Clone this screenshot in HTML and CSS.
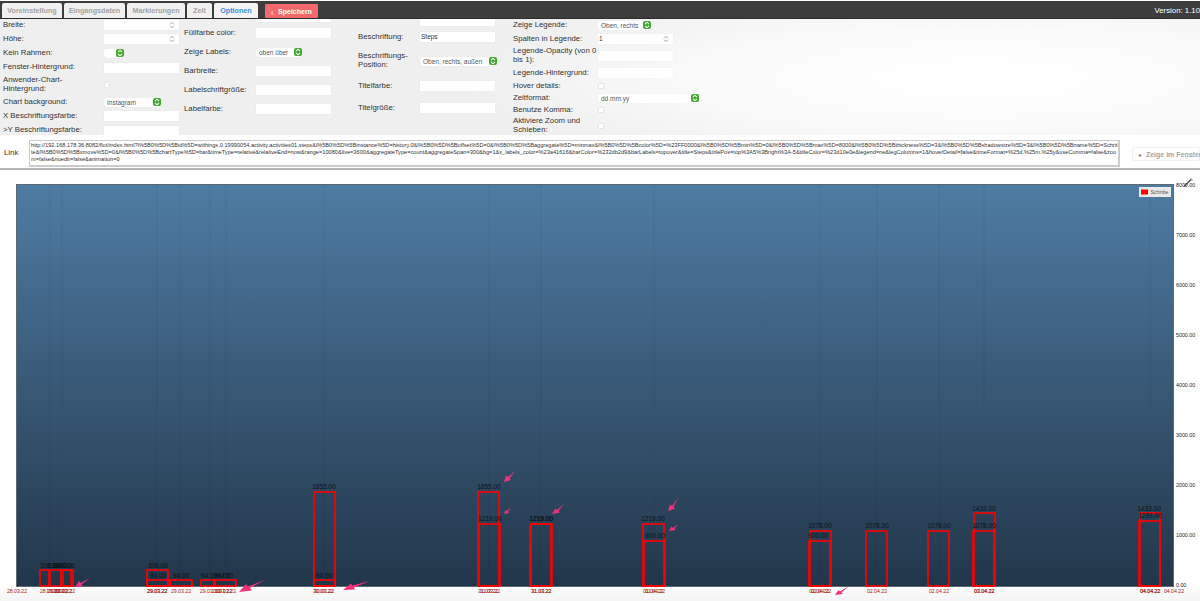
FILE: index.html
```html
<!DOCTYPE html>
<html lang="en">
<head>
    <meta charset="UTF-8">
    <title>Flot Edit</title>
    <link rel="stylesheet" href="styles.css">
</head>
<body>
    <svg class="defs" width="0" height="0">
        <symbol id="updown" viewBox="0 0 8 10">
            <path d="M1.5 4 4 1.5 6.500 4M1.500 6 4 8.500 6.500 6" fill="none" stroke-width="1.300"/>
        </symbol>
    </svg>

    <header class="topbar">
        <nav class="tabs">
            <a class="tab tab-preset">Voreinstellung</a>
            <a class="tab tab-input">Eingangsdaten</a>
            <a class="tab tab-marks">Markierungen</a>
            <a class="tab tab-time">Zeit</a>
            <a class="tab tab-options active">Optionen</a>
        </nav>
        <button class="save-btn"><span class="save-icon">▮</span> Speichern</button>
        <div class="version">Version: 1.10</div>
    </header>

    <section class="options">
        <div class="col col-1">
            <label>Breite:</label><div class="field number"><svg class="spin"><use href="#updown"/></svg></div>
            <label>Höhe:</label><div class="field number"><svg class="spin"><use href="#updown"/></svg></div>
            <label>Kein Rahmen:</label><div class="select select-tiny"><span></span><b><svg><use href="#updown"/></svg></b></div>
            <label>Fenster-Hintergrund:</label><div class="field"></div>
            <label>Anwender-Chart-Hintergrund:</label><div><input type="checkbox" class="check"></div>
            <label>Chart background:</label><div class="select select-bg"><span>Instagram</span><b><svg><use href="#updown"/></svg></b></div>
            <label>X Beschriftungsfarbe:</label><div class="field"></div>
            <label>&gt;Y Beschriftungsfarbe:</label><div class="field"></div>
        </div>
        <div class="col col-2">
            <label></label><div class="field"></div>
            <label>Füllfarbe color:</label><div class="field"></div>
            <label>Zeige Labels:</label><div class="select select-labels"><span>oben über</span><b><svg><use href="#updown"/></svg></b></div>
            <label>Barbreite:</label><div class="field"></div>
            <label>Labelschriftgröße:</label><div class="field"></div>
            <label>Labelfarbe:</label><div class="field"></div>
        </div>
        <div class="col col-3">
            <label></label><div class="field"></div>
            <label>Beschriftung:</label><div class="field">Steps</div>
            <label>Beschriftungs-Position:</label><div class="select select-pos"><span>Oben, rechts, außen</span><b><svg><use href="#updown"/></svg></b></div>
            <label>Titelfarbe:</label><div class="field"></div>
            <label>Titelgröße:</label><div class="field"></div>
        </div>
        <div class="col col-4">
            <label>Zeige Legende:</label><div class="select select-legend"><span>Oben, rechts</span><b><svg><use href="#updown"/></svg></b></div>
            <label>Spalten in Legende:</label><div class="field number">1<svg class="spin"><use href="#updown"/></svg></div>
            <label>Legende-Opacity (von 0 bis 1):</label><div class="field"></div>
            <label>Legende-Hintergrund:</label><div class="field"></div>
            <label>Hover details:</label><div><input type="checkbox" class="check"></div>
            <label>Zeitformat:</label><div class="select select-format"><span>dd.mm.yy</span><b><svg><use href="#updown"/></svg></b></div>
            <label>Benutze Komma:</label><div><input type="checkbox" class="check"></div>
            <label>Aktiviere Zoom und Schieben:</label><div><input type="checkbox" class="check"></div>
        </div>
    </section>

    <section class="link-row">
        <label class="link-label">Link</label>
        <textarea class="link-text" wrap="off" readonly>http://192.168.178.36:8082/flot/index.html?l%5B0%5D%5Bid%5D=withings.0.19990054.activity.activities01.steps&amp;l%5B0%5D%5Binstance%5D=history.0&amp;l%5B0%5D%5Boffset%5D=0&amp;l%5B0%5D%5Baggregate%5D=minmax&amp;l%5B0%5D%5Bcolor%5D=%23FF0000&amp;l%5B0%5D%5Bmin%5D=0&amp;l%5B0%5D%5Bmax%5D=8000&amp;l%5B0%5D%5Bthickness%5D=3&amp;l%5B0%5D%5Bshadowsize%5D=3&amp;l%5B0%5D%5Bname%5D=Schrit
te&amp;l%5B0%5D%5Bxmove%5D=0&amp;l%5B0%5D%5BchartType%5D=bar&amp;timeType=relative&amp;relativeEnd=now&amp;range=10080&amp;live=3600&amp;aggregateType=count&amp;aggregateSpan=300&amp;bg=1&amp;x_labels_color=%23a41616&amp;barColor=%232db2d9&amp;barLabels=topover&amp;title=Steps&amp;titlePos=top%3A5%3Bright%3A-5&amp;titleColor=%23d10e0e&amp;legend=ne&amp;legColumns=1&amp;hoverDetail=false&amp;timeFormat=%25d.%25m.%25y&amp;useComma=false&amp;zoo
m=false&amp;noedit=false&amp;animation=0</textarea>
        <button class="window-btn"><span class="play">►</span> Zeige im Fenster</button>
    </section>

    <section class="chart-wrap">
        <svg class="chart" width="1200" height="431" viewBox="0 170 1200 431">
            <defs>
                <linearGradient id="plotBg" x1="0" y1="0" x2="0" y2="1">
                    <stop offset="0" stop-color="#4f7ca3"/>
                    <stop offset="1" stop-color="#22364a"/>
                </linearGradient>
            </defs>
            <rect class="plot" x="16.500" y="184.500" width="1157" height="402"/>

            <!-- faint grid -->
            <g class="grid">
                <path d="M50 185V586M62 185V586M157 185V586M180 185V586M210 185V586M226 185V586M324 185V586M489 185V586M541 185V586M654 185V586M820 185V586M877 185V586M939 185V586M984 185V586M1150 185V586"/>
            </g>

            <!-- bars -->
            <g class="bars">
                <rect x="40" y="570" width="9" height="16"/>
                <rect x="50" y="570" width="11" height="16"/>
                <rect x="61" y="570" width="10" height="16"/>
                <rect x="63" y="570" width="10" height="16"/>
                <rect x="147" y="570" width="21" height="16"/>
                <rect x="147" y="580" width="21" height="6"/>
                <rect x="170" y="580" width="22" height="6"/>
                <rect x="201" y="580" width="13" height="6"/>
                <rect x="215" y="580" width="21" height="6"/>
                <rect x="314" y="492" width="21" height="94"/>
                <rect x="314" y="580" width="21" height="6"/>
                <rect x="478" y="492" width="21" height="94"/>
                <rect x="479" y="524" width="21" height="62"/>
                <rect x="530" y="524" width="21" height="62"/>
                <rect x="531" y="524" width="21" height="62"/>
                <rect x="643" y="524" width="21" height="62"/>
                <rect x="644" y="541" width="21" height="45"/>
                <rect x="810" y="531" width="21" height="55"/>
                <rect x="809" y="541" width="21" height="45"/>
                <rect x="866" y="531" width="21" height="55"/>
                <rect x="928" y="531" width="21" height="55"/>
                <rect x="974" y="513" width="21" height="73"/>
                <rect x="973" y="531" width="21" height="55"/>
                <rect x="1139" y="521" width="21" height="65"/>
                <rect x="1140" y="513" width="20" height="73"/>
            </g>

            <!-- bar labels -->
            <g class="bar-labels">
                <text x="50" y="568">306.00</text>
                <text x="57" y="568">300.00</text>
                <text x="62" y="568">300.00</text>
                <text x="65" y="568">300.00</text>
                <text x="158" y="568">306.00</text>
                <text x="158" y="578">94.00</text>
                <text x="181" y="578">94.00</text>
                <text x="209" y="578">94.00</text>
                <text x="222" y="578">94.00</text>
                <text x="225" y="578">94.00</text>
                <text x="324" y="489">1855.00</text>
                <text x="324" y="578">94.00</text>
                <text x="489" y="489">1855.00</text>
                <text x="490" y="521">1219.00</text>
                <text x="541" y="521">1219.00</text>
                <text x="541.300" y="521">1219.00</text>
                <text x="653" y="521">1219.00</text>
                <text x="655" y="538">900.00</text>
                <text x="820" y="528">1078.00</text>
                <text x="818" y="538">900.00</text>
                <text x="877" y="528">1078.00</text>
                <text x="939" y="528">1078.00</text>
                <text x="984" y="511">1433.00</text>
                <text x="984" y="528">1078.00</text>
                <text x="1149" y="511">1433.00</text>
                <text x="1150" y="518">1289.00</text>
            </g>

            <!-- x axis -->
            <g class="x-labels">
                <text x="17" y="593">28.03.22</text>
                <text x="50" y="593">28.03.22</text>
                <text x="57" y="593">28.03.22</text>
                <text x="62" y="593">28.03.22</text>
                <text x="65" y="593">28.03.22</text>
                <text x="157" y="593">29.03.22</text>
                <text x="157.400" y="593">29.03.22</text>
                <text x="181" y="593">29.03.22</text>
                <text x="210" y="593">29.03.22</text>
                <text x="222" y="593">29.03.22</text>
                <text x="226" y="593">29.03.22</text>
                <text x="323" y="593">30.03.22</text>
                <text x="324" y="593">30.03.22</text>
                <text x="488" y="593">31.03.22</text>
                <text x="490" y="593">31.03.22</text>
                <text x="541" y="593">31.03.22</text>
                <text x="541.400" y="593">31.03.22</text>
                <text x="653" y="593">01.04.22</text>
                <text x="655" y="593">01.04.22</text>
                <text x="819" y="593">02.04.22</text>
                <text x="821" y="593">02.04.22</text>
                <text x="877" y="593">02.04.22</text>
                <text x="939" y="593">02.04.22</text>
                <text x="984" y="593">03.04.22</text>
                <text x="984.400" y="593">03.04.22</text>
                <text x="1150" y="593">04.04.22</text>
                <text x="1150.400" y="593">04.04.22</text>
                <text x="1174" y="593">04.04.22</text>
            </g>

            <!-- y axis -->
            <g class="y-labels">
                <text x="1176" y="187">8000.00</text>
                <text x="1176" y="237">7000.00</text>
                <text x="1176" y="287">6000.00</text>
                <text x="1176" y="337">5000.00</text>
                <text x="1176" y="387">4000.00</text>
                <text x="1176" y="437">3000.00</text>
                <text x="1176" y="487">2000.00</text>
                <text x="1176" y="537">1000.00</text>
                <text x="1176" y="587">0.00</text>
            </g>

            <!-- legend -->
            <rect class="legend-box" x="1139" y="187" width="32" height="10"/>
            <rect class="legend-swatch" x="1141" y="189.500" width="7" height="5"/>
            <text class="legend-text" x="1150.500" y="194">Schritte</text>

            <!-- edit pencil -->
            <g class="pencil">
                <path d="M1184 186.500 1191 179.500"/>
                <path class="pencil-tip" d="M1190.500 178.500 1192.500 180.500"/>
            </g>

            <!-- annotation arrows -->
            <g class="arrows">
                <path d="M75 587 79 581 80.500 583 90 578 81.500 584.500 83 586Z"/>
                <path d="M239 592 246 584 248 586.500 265 580 250 588 252 590.500Z"/>
                <path d="M343 590 351 583.500 352.500 585.500 370 581 354 587.500 355 589.500Z"/>
                <path d="M504 482 506 475.500 508 477 515 471 509.500 478.500 511 480Z"/>
                <path d="M504 514 505.500 510 507 511 511 507 508 512 509.500 513Z"/>
                <path d="M552 514 555.500 508.500 557 510 564 504 558.500 511 560 512.500Z"/>
                <path d="M668 511 670 504.500 672 506 678 498 673.500 507 675 508.500Z"/>
                <path d="M669 531 671.500 526.500 673 528 678 524 674.500 529 676 530Z"/>
                <path d="M835 595 838.500 590 840 591.500 849 586 841.500 592.500 843 594Z"/>
            </g>
        </svg>
    </section>
</body>
</html>
```

FILE: styles.css
```css
* {
    box-sizing: border-box;
}

html, body {
    margin: 0;
    padding: 0;
    height: 601px;
    overflow: hidden;
}

body {
    font-family: "Liberation Sans", Arial, sans-serif;
    font-size: 7.800px;
    color: #333;
    background: #fff;
}

.defs {
    display: block;
    height: 0;
}

/* top bar */
.topbar {
    display: flex;
    align-items: flex-start;
    height: 18px;
    margin-top: 1px;
    padding: 2px 0 0 2px;
    background: #3d3d3d;
    border-bottom: 1px solid #2c2c2c;
    overflow: hidden;
}

.tabs {
    display: flex;
    gap: 2px;
}

.tab {
    display: block;
    height: 16px;
    line-height: 15px;
    text-align: center;
    font-size: 7.200px;
    font-weight: 700;
    color: #a3a3a3;
    background: #f0f0f0;
    border-radius: 2px 2px 0 0;
}

.tab-preset { width: 60px; }
.tab-input { width: 61px; }
.tab-marks { width: 58px; }
.tab-time { width: 25px; }
.tab-options { width: 44px; }

.tab.active {
    color: #3a8fdc;
    background: #f4f4f4;
}

.save-btn {
    height: 14px;
    width: 53px;
    margin: 1px 0 0 7px;
    padding: 0;
    border: none;
    border-radius: 1px;
    font-family: inherit;
    font-size: 7px;
    font-weight: 700;
    color: #fff;
    background: #f2696c;
}

.save-icon {
    font-size: 4px;
    margin-right: 3px;
    color: #f7b9ba;
}

.version {
    margin-left: auto;
    padding-top: 3px;
    font-size: 7.800px;
    line-height: 10px;
    color: #fff;
    white-space: nowrap;
}

/* options panel */
.options {
    display: flex;
    height: 116px;
    overflow: hidden;
    background: radial-gradient(ellipse 520px 95px at 980px 60px, #fff 0%, #fbfbfb 50%, #efefef 100%);
}

.col {
    display: grid;
    align-items: center;
    flex: none;
}

.col label {
    line-height: 8.800px;
}

.col-1 {
    width: 181px;
    margin-left: 3px;
    margin-top: -1px;
    grid-template-columns: 101px 75px;
    grid-template-rows: 14px 14px 14px 15px 20px 14px 14px 15px;
}

.col-2 {
    width: 174px;
    margin-top: -7px;
    grid-template-columns: 72px 75px;
    grid-template-rows: 9px 24px 14px 24px 14px 24px;
}

.col-3 {
    width: 155px;
    margin-top: -3px;
    grid-template-columns: 62px 75px;
    grid-template-rows: 10px 22px 26px 24px 20px;
}

.col-4 {
    width: 240px;
    margin-top: -1px;
    grid-template-columns: 85px 101px;
    grid-template-rows: 14px 14px 20px 14px 12px 12px 12px 19px;
}

.field {
    position: relative;
    height: 10px;
    padding-left: 1px;
    font-size: 6.500px;
    line-height: 10px;
    background: #fff;
    box-shadow: 0 0 1px rgba(0, 0, 0, 0.08);
}

.col-4 .field {
    width: 75px;
}

.spin {
    position: absolute;
    right: 4px;
    top: 1px;
    width: 6px;
    height: 8px;
    stroke: #999;
}

.select {
    display: flex;
    align-items: center;
    justify-content: space-between;
    height: 9px;
    padding-left: 3px;
    font-size: 6.500px;
    color: #555;
    background: #fff;
    border-radius: 3px;
    box-shadow: 0 0 1px rgba(0, 0, 0, 0.1);
}

.select b {
    display: block;
    width: 8px;
    height: 8px;
    background: #43a82f;
    border-radius: 2px;
}

.select b svg {
    display: block;
    width: 8px;
    height: 8px;
    stroke: #fff;
}

.select-tiny { width: 20px; }
.select-bg { width: 57px; }
.select-labels { width: 46px; }
.select-pos { width: 77px; }
.select-legend { width: 53px; }
.select-format { width: 101px; }

.check {
    appearance: none;
    display: block;
    width: 6px;
    height: 6px;
    margin: 0;
    background: #fff;
    border: 1px solid #e6e6e6;
    border-radius: 1px;
}

/* link row */
.link-row {
    display: flex;
    align-items: flex-start;
    height: 35px;
    padding-top: 5px;
    background: #fff;
    border-bottom: 2px solid #b5b5b5;
}

.link-label {
    flex: none;
    width: 29px;
    padding: 8px 0 0 4px;
    font-size: 7.800px;
}

.link-text {
    flex: none;
    width: 1091px;
    height: 27px;
    padding: 1px;
    margin: 0;
    resize: none;
    overflow: hidden;
    font-family: "Liberation Sans", Arial, sans-serif;
    font-size: 5.630px;
    line-height: 7px;
    color: #333;
    border: 1px solid #ccc;
    border-right-width: 2px;
    border-bottom-width: 2px;
    outline: none;
}

.window-btn {
    flex: none;
    width: 68px;
    height: 14px;
    margin: 7px 0 0 12px;
    padding: 0 0 0 5px;
    text-align: left;
    font-family: inherit;
    font-size: 7px;
    font-weight: 700;
    color: #a3a3a3;
    background: #fff;
    border: 1px solid #f0f0f0;
    border-radius: 2px;
    white-space: nowrap;
}

.play {
    font-size: 5px;
    color: #777;
    margin-right: 1px;
}

/* chart */
.chart-wrap {
    height: 431px;
    background: linear-gradient(#fff 0%, #fff 96%, #f4f4f4 100%);
}

.chart {
    display: block;
}

.plot {
    fill: url(#plotBg);
    stroke: #5d6870;
    stroke-width: 1;
}

.grid path {
    fill: none;
    stroke: rgba(20, 40, 60, 0.07);
    stroke-width: 1;
}

.bars rect {
    fill: none;
    stroke: #f00;
    stroke-width: 1.600;
}

.bar-labels text {
    font-size: 6.500px;
    text-anchor: middle;
    fill: #0c1218;
}

.x-labels text {
    font-size: 5.200px;
    text-anchor: middle;
    fill: #a41616;
}

.y-labels text {
    font-size: 5.300px;
    fill: #222;
}

.legend-box {
    fill: #e9e9e9;
}

.legend-swatch {
    fill: #f00;
}

.legend-text {
    font-size: 5.300px;
    fill: #555;
}

.pencil path {
    fill: none;
    stroke: #444;
    stroke-width: 1.300;
}

.pencil .pencil-tip {
    stroke: #999;
}

.arrows path {
    fill: #f2307c;
}
```
